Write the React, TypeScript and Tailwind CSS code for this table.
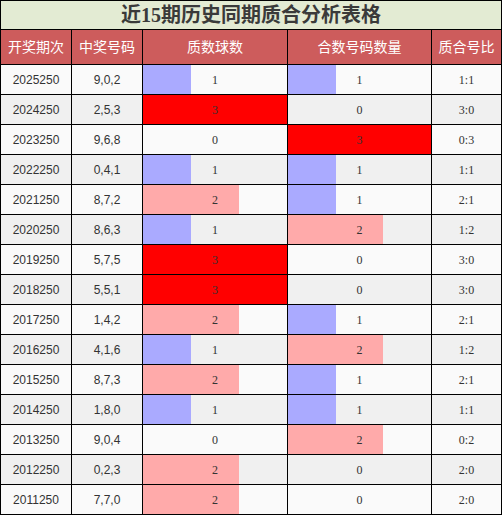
import React from 'react'

const rows = [
    { issue: "2025250", nums: "9,0,2", prime: 1, comp: 1 },
    { issue: "2024250", nums: "2,5,3", prime: 3, comp: 0 },
    { issue: "2023250", nums: "9,6,8", prime: 0, comp: 3 },
    { issue: "2022250", nums: "0,4,1", prime: 1, comp: 1 },
    { issue: "2021250", nums: "8,7,2", prime: 2, comp: 1 },
    { issue: "2020250", nums: "8,6,3", prime: 1, comp: 2 },
    { issue: "2019250", nums: "5,7,5", prime: 3, comp: 0 },
    { issue: "2018250", nums: "5,5,1", prime: 3, comp: 0 },
    { issue: "2017250", nums: "1,4,2", prime: 2, comp: 1 },
    { issue: "2016250", nums: "4,1,6", prime: 1, comp: 2 },
    { issue: "2015250", nums: "8,7,3", prime: 2, comp: 1 },
    { issue: "2014250", nums: "1,8,0", prime: 1, comp: 1 },
    { issue: "2013250", nums: "9,0,4", prime: 0, comp: 2 },
    { issue: "2012250", nums: "0,2,3", prime: 2, comp: 0 },
    { issue: "2011250", nums: "7,7,0", prime: 2, comp: 0 },
];

const barColor = ["", "bg-[#aaaaff]", "bg-[#ffaaaa]", "bg-[#ff0000]"];

const cols = "grid grid-cols-[71px_71px_145px_144px_70px]";
const cell = "border-r border-b border-black flex items-center justify-center";

const BarCell = ({ value }: { value: number }) => (
    <div className={`${cell} relative`}>
        {value > 0 && (
            <div className={`absolute left-0 top-0 bottom-0 ${barColor[value]}`}
                style={{ width: `${(value / 3) * 100}%` }}></div>
        )}
        <span className="relative">{value}</span>
    </div>
);

export default function App() {
    return (
        <div className="w-[502px] border-l border-t border-black font-['Liberation_Serif','Noto_Sans_CJK_SC',serif] text-[#333]">
            <div className="h-[29px] border-r border-b border-black bg-[#e3ebd3] flex items-center justify-center text-[20px] font-bold text-[#3a3a3a]">
                近15期历史同期质合分析表格
            </div>
            <div className={`${cols} h-[35px] bg-[#cd5c5c] text-[14px] text-white`}>
                <div className={cell}>开奖期次</div>
                <div className={cell}>中奖号码</div>
                <div className={cell}>质数球数</div>
                <div className={cell}>合数号码数量</div>
                <div className={cell}>质合号比</div>
            </div>
            {rows.map((r, i) => (
                <div key={r.issue} className={`${cols} h-[30px] text-[12px] ${i % 2 === 0 ? "bg-[#fafafa]" : "bg-[#f0f0f0]"}`}>
                    <div className={`${cell} font-['Liberation_Sans',sans-serif]`}>{r.issue}</div>
                    <div className={`${cell} font-['Liberation_Sans',sans-serif]`}>{r.nums}</div>
                    <BarCell value={r.prime} />
                    <BarCell value={r.comp} />
                    <div className={cell}>{r.prime}:{r.comp}</div>
                </div>
            ))}
        </div>
    )
}
